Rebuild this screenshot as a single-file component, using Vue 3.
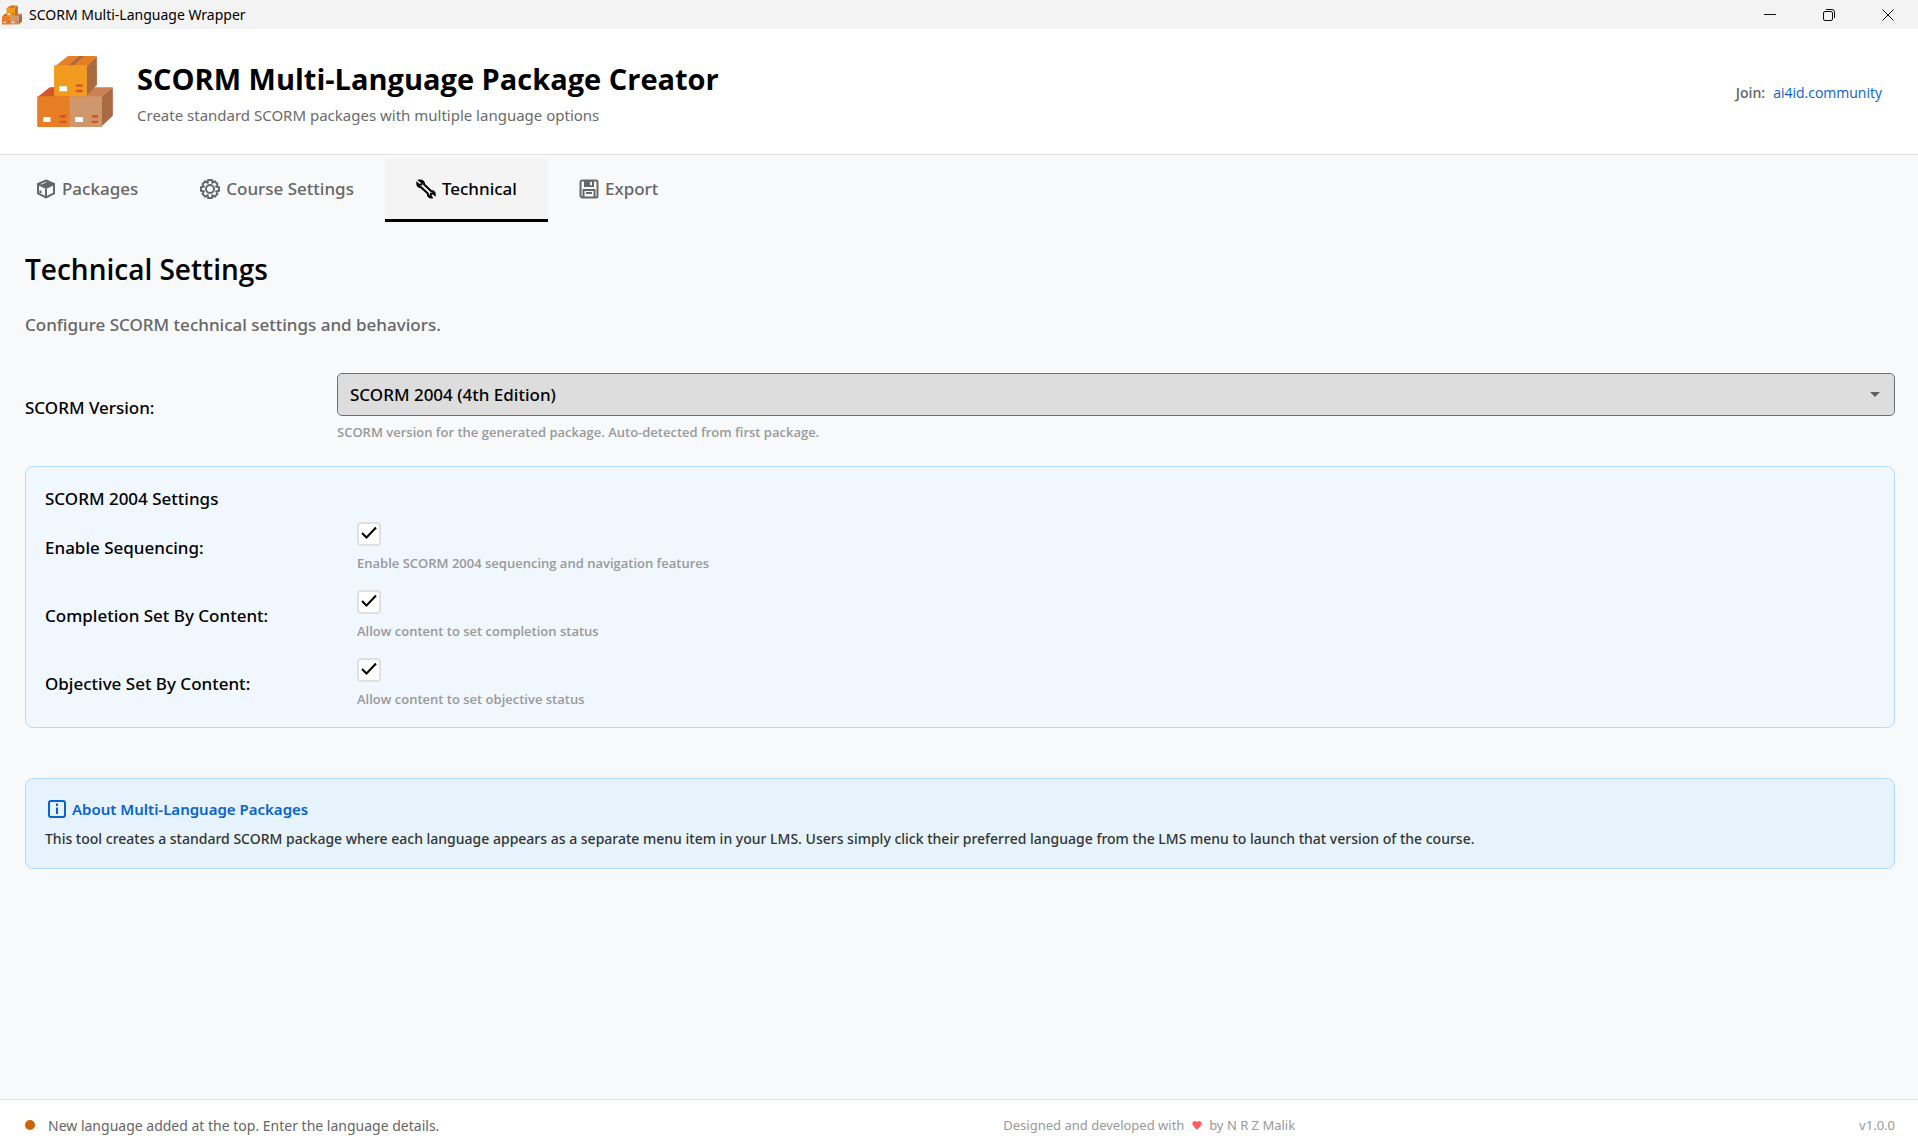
<script setup>
import { ref } from 'vue'

const tabs = [
  { id: 'packages', label: 'Packages' },
  { id: 'course', label: 'Course Settings' },
  { id: 'technical', label: 'Technical' },
  { id: 'export', label: 'Export' },
]
const activeTab = ref('technical')
const version = ref('2004-4')
const options = ref([
  { id: 'sequencing', label: 'Enable Sequencing:', help: 'Enable SCORM 2004 sequencing and navigation features', on: true },
  { id: 'completion', label: 'Completion Set By Content:', help: 'Allow content to set completion status', on: true },
  { id: 'objective', label: 'Objective Set By Content:', help: 'Allow content to set objective status', on: true },
])
</script>

<template>
  <div class="window">
    <svg width="0" height="0" class="defs" aria-hidden="true">
      <symbol id="boxes" viewBox="111 167 228 214">
        <path fill="#d35629" d="M111 291 149 261H240L212 291Z" />
        <path fill="#cb8154" d="M208 291 262 261H339L306 291Z" />
        <path fill="#a76a43" d="M305 291 339 261V347L303 381Z" />
        <rect fill="#e77e25" x="111" y="288" width="100" height="93" rx="4" />
        <rect fill="#d0976c" x="209" y="288" width="97" height="93" rx="4" />
        <path fill="#a76a43" d="M259 198 291 168V254L259 288Z" />
        <path fill="#e77e25" d="M162 200 204 167H291L260 200Z" />
        <path fill="#a76a43" d="M207 195 238 167H252L221 195Z" />
        <rect fill="#f29c1f" x="162" y="195" width="99" height="93" rx="4" />
        <path fill="#fff" d="M177 258h24v15h-24zM129 351h22v15h-22zM225 351h24v15h-24z" />
        <g fill="#d35629">
          <rect x="228" y="252" width="21" height="8" rx="4" />
          <rect x="228" y="269" width="21" height="7" rx="3" />
          <rect x="178" y="345" width="21" height="8" rx="4" />
          <rect x="178" y="362" width="21" height="7" rx="3" />
          <rect x="275" y="345" width="20" height="8" rx="4" />
          <rect x="275" y="362" width="20" height="7" rx="3" />
        </g>
      </symbol>
    </svg>

    <div class="titlebar">
      <svg class="app-icon"><use href="#boxes" /></svg>
      <span class="app-name">SCORM Multi-Language Wrapper</span>
      <div class="controls">
        <button type="button" aria-label="Minimize">
          <svg width="14" height="14" viewBox="0 0 14 14"><path d="M1 6.500h12" /></svg>
        </button>
        <button type="button" aria-label="Restore">
          <svg width="14" height="14" viewBox="0 0 14 14"><rect x="1.500" y="3.500" width="9" height="9" rx="1.500" /><path d="M4 1.500h6a2.500 2.500 0 0 1 2.500 2.500v6" /></svg>
        </button>
        <button type="button" aria-label="Close">
          <svg width="14" height="14" viewBox="0 0 14 14"><path d="M1.500 1.500l11 11M12.500 1.500l-11 11" /></svg>
        </button>
      </div>
    </div>

    <header class="header">
      <svg class="logo"><use href="#boxes" /></svg>
      <div class="brand">
        <h1>SCORM Multi-Language Package Creator</h1>
        <p>Create standard SCORM packages with multiple language options</p>
      </div>
      <div class="join"><span>Join:</span><a href="#community">ai4id.community</a></div>
    </header>

    <nav class="tabs">
      <button v-for="t in tabs" :key="t.id" type="button" class="tab" :class="{ active: activeTab === t.id }" @click="activeTab = t.id">
        <svg v-if="t.id === 'packages'" class="tab-icon" viewBox="0 0 20 20">
          <path d="M10 1.500 18 5v9.500L10 18.500 2 14.500V5ZM2 5l8 4 8-4M10 9v9.500M5.500 6.800 13 3M7.500 8 15 4.200M4.500 11.500v2.500" />
        </svg>
        <svg v-else-if="t.id === 'course'" class="tab-icon" viewBox="0 0 20 20">
          <path d="M8.200 1h3.600l.6 2.600 2.300-1.300 2.800 2.800-1.200 2.400 2.700.7v3.600l-2.700.7 1.200 2.400-2.800 2.800-2.300-1.300-.6 2.600H8.200l-.6-2.600-2.300 1.300-2.800-2.800 1.200-2.400L1 11.800V8.200l2.700-.7-1.200-2.400 2.800-2.800 2.300 1.300Z" />
          <circle cx="10" cy="10" r="4" stroke-width="2" />
        </svg>
        <svg v-else-if="t.id === 'technical'" class="tab-icon" viewBox="0 0 20 20">
          <path d="M3.500 1.500 6 3.500 5.500 5.500 3.500 6 1.200 4.200C1 6.500 2.500 8.300 5 8.200L11.800 14.500C11.600 17 13.500 18.800 15.700 18.500L14.500 16.500 15 14.700 17 14.300 18.800 15.800C19 13.500 17.300 11.800 15 12L8.200 5.500C8.300 3 6.500 1 3.500 1.500Z" />
        </svg>
        <svg v-else class="tab-icon" viewBox="0 0 20 20">
          <path d="M1.500 3a1.500 1.500 0 0 1 1.500-1.500h14A1.500 1.500 0 0 1 18.500 3v14a1.500 1.500 0 0 1-1.500 1.500H3L1.500 17ZM4.500 18.500V11h11v7.500M7 14h6" />
          <path class="solid" d="M5 1.500h10V8H5Zm6 1.200v3.600h2V2.700Z" />
        </svg>
        <span>{{ t.label }}</span>
      </button>
    </nav>

    <main class="content">
      <h2>Technical Settings</h2>
      <p class="lead">Configure SCORM technical settings and behaviors.</p>

      <div class="field">
        <label for="version">SCORM Version:</label>
        <div class="control">
          <div class="select-wrap">
            <select id="version" v-model="version">
              <option value="1.2">SCORM 1.2</option>
              <option value="2004-3">SCORM 2004 (3rd Edition)</option>
              <option value="2004-4">SCORM 2004 (4th Edition)</option>
            </select>
            <svg class="caret" width="10" height="5" viewBox="0 0 10 5"><path d="M0 0h10L5 5Z" /></svg>
          </div>
          <p class="help">SCORM version for the generated package. Auto-detected from first package.</p>
        </div>
      </div>

      <section class="panel">
        <h3>SCORM 2004 Settings</h3>
        <div v-for="o in options" :key="o.id" class="field">
          <label :for="o.id">{{ o.label }}</label>
          <div class="control">
            <span class="check">
              <input :id="o.id" v-model="o.on" type="checkbox" />
              <svg v-if="o.on" width="18" height="16" viewBox="0 0 18 16"><path d="M2 7l4.500 4.500L16 1.500" /></svg>
            </span>
            <p class="help">{{ o.help }}</p>
          </div>
        </div>
      </section>

      <section class="info">
        <h3>
          <svg width="18" height="18" viewBox="0 0 18 18">
            <rect x="1" y="1" width="16" height="16" rx="2" />
            <path d="M9 3.500v2.500M9 7.500v6.500" />
          </svg>
          About Multi-Language Packages
        </h3>
        <p>This tool creates a standard SCORM package where each language appears as a separate menu item in your LMS. Users simply click their preferred language from the LMS menu to launch that version of the course.</p>
      </section>
    </main>

    <footer class="footer">
      <div class="status"><span class="dot"></span>New language added at the top. Enter the language details.</div>
      <div class="credit">
        Designed and developed with
        <svg width="10" height="9" viewBox="0 0 10 9"><path d="M5 9 1 4.500C-.5 2.500.8 0 2.800 0 4 0 4.700.7 5 1.300 5.300.7 6 0 7.200 0c2 0 3.300 2.500 1.800 4.500Z" /></svg>
        by N R Z Malik
      </div>
      <div class="version">v1.0.0</div>
    </footer>
  </div>
</template>

<style>
body {
  margin: 0;
  background: #f8f9fb;
}
</style>

<style scoped>
.window {
  display: flex;
  flex-direction: column;
  min-height: 100vh;
  font-family: "Noto Sans", "Open Sans", sans-serif;
  font-size: 17px;
  color: #000;
  background: #f8f9fb;
}
h1,
h2,
.join,
.help {
  font-family: "Open Sans", "Noto Sans", sans-serif;
}
.defs {
  position: absolute;
}
h1, h2, h3, p {
  margin: 0;
}
button {
  font: inherit;
  border: 0;
  background: none;
  padding: 0;
}

.titlebar {
  display: flex;
  align-items: center;
  height: 29px;
  background: #f3f3f3;
  font-size: 14px;
}
.app-icon {
  width: 20px;
  height: 20px;
  margin: 0 7px 0 2px;
}
.controls {
  display: flex;
  margin-left: auto;
  padding-right: 1px;
}
.controls button {
  width: 59px;
  height: 28px;
  display: grid;
  place-items: center;
}
.controls svg {
  fill: none;
  stroke: #111;
}

.header {
  display: flex;
  align-items: center;
  height: 125px;
  padding: 0 36px 0 37px;
  background: #fff;
  border-bottom: 1px solid #dfe0e2;
}
.logo {
  width: 76px;
  height: 71px;
  margin-right: 24px;
}
.brand {
  padding-top: 6px;
}
h1 {
  font-size: 29px;
  line-height: 40px;
  font-weight: 700;
}
.brand p {
  font-size: 15px;
  line-height: 32px;
  color: #6b6b6b;
}
.join {
  display: flex;
  gap: 8px;
  margin-left: auto;
  padding-top: 2px;
  font-size: 14px;
  font-weight: 600;
  color: #666;
}
.join a {
  color: #0a62cc;
  font-weight: 400;
  text-decoration: none;
}

.tabs {
  display: flex;
  padding: 3px 5px 0;
}
.tab {
  display: flex;
  align-items: center;
  gap: 6px;
  height: 64px;
  padding: 0 31px;
  font-size: 17px;
  font-weight: 500;
  color: #666;
  border-bottom: 3px solid transparent;
}
.tab.active {
  color: #000;
  background: #f4f4f4;
  border-bottom-color: #000;
}
.tab-icon {
  width: 20px;
  height: 20px;
  fill: none;
  stroke: currentColor;
  stroke-width: 2;
}
.tab-icon .solid {
  fill: currentColor;
  fill-rule: evenodd;
  stroke: none;
}

.content {
  flex: 1;
  padding: 25px 23px 24px 25px;
}
h2 {
  font-size: 28px;
  line-height: 44px;
  font-weight: 600;
}
.lead {
  margin-top: 20px;
  line-height: 28px;
  font-weight: 500;
  color: #666;
}
.field {
  display: grid;
  grid-template-columns: 312px 1fr;
  align-items: center;
}
.field label {
  font-weight: 500;
}
.content > .field {
  margin-top: 34px;
}
.select-wrap {
  display: grid;
  align-items: center;
}
.select-wrap > * {
  grid-area: 1 / 1;
}
select {
  appearance: none;
  width: 100%;
  height: 43px;
  padding: 0 12px;
  font: inherit;
  font-weight: 500;
  color: #000;
  background: #ddd;
  border: 1px solid #707070;
  border-radius: 5px;
}
.caret {
  justify-self: end;
  margin-right: 15px;
  fill: #606060;
  pointer-events: none;
}
.help {
  font-size: 13px;
  line-height: 20px;
  font-weight: 600;
  color: #999;
}
.select-wrap + .help {
  margin-top: 6px;
}

.panel,
.info {
  padding: 19px;
  border: 1px solid #b3d9ff;
  border-radius: 8px;
}
.panel {
  margin-top: 24px;
  padding-bottom: 11px;
  background: #f0f7ff;
}
.panel h3 {
  font-size: 17px;
  line-height: 26px;
  font-weight: 500;
}
.panel .field {
  align-items: start;
  margin-top: 10px;
  height: 58px;
}
.panel .field label {
  line-height: 52px;
}
.check {
  display: grid;
  place-items: center;
  width: 24px;
  height: 24px;
}
.check > * {
  grid-area: 1 / 1;
}
.check input {
  appearance: none;
  width: 24px;
  height: 24px;
  margin: 0;
  background: #fff;
  border: 2px solid #e0e0e0;
  border-radius: 4px;
}
.check svg {
  z-index: 1;
  fill: none;
  stroke: #000;
  stroke-width: 2;
  pointer-events: none;
}
.check + .help {
  margin-top: 7px;
}

.info {
  margin-top: 50px;
  padding-top: 18px;
  background: #e6f3fd;
}
.info h3 {
  display: flex;
  align-items: center;
  gap: 6px;
  padding-left: 3px;
  font-size: 15px;
  line-height: 24px;
  font-weight: 600;
  color: #0a62cc;
}
.info h3 svg {
  fill: none;
  stroke: currentColor;
  stroke-width: 2;
}
.info p {
  margin-top: 8px;
  font-size: 14px;
  line-height: 20px;
  font-weight: 500;
  color: #333;
}

.footer {
  display: flex;
  justify-content: space-between;
  align-items: center;
  height: 47px;
  padding: 4px 23px 0 25px;
  box-sizing: border-box;
  background: #fff;
  border-top: 1px solid #dcdfe3;
  font-size: 14px;
  color: #666;
}
.status {
  display: flex;
  align-items: center;
  gap: 13px;
}
.dot {
  width: 10px;
  height: 10px;
  border-radius: 50%;
  background: #c96400;
}
.credit,
.version {
  font-size: 13px;
  color: #999;
}
.credit svg {
  margin: 0 4px;
  fill: #ff5f5f;
}
</style>
